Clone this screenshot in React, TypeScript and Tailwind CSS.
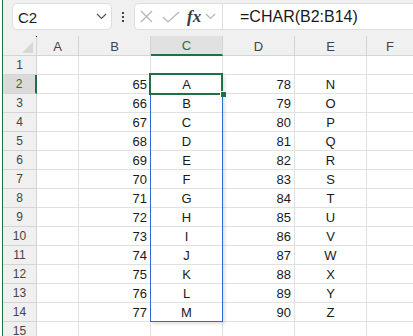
import React from 'react';

// Excel-like sheet: CHAR() spill over B2:B14
const rows = Array.from({ length: 15 }, (_, i) => i + 1);
const cols = ['A', 'B', 'C', 'D', 'E', 'F'];
const colW: Record<string, string> = {
  A: 'w-[42px]',
  B: 'w-[72px]',
  C: 'w-[72px]',
  D: 'w-[72px]',
  E: 'w-[72px]',
  F: 'flex-1',
};

function cellValue(col: string, row: number): string {
  if (row < 2 || row > 14) return '';
  const i = row - 2;
  if (col === 'B') return String(65 + i);
  if (col === 'C') return String.fromCharCode(65 + i);
  if (col === 'D') return String(78 + i);
  if (col === 'E') return String.fromCharCode(78 + i);
  return '';
}

function Chevron({ color = '#555' }: { color?: string }) {
  return (
    <svg width="11" height="7" viewBox="0 0 11 7" fill="none">
      <path d="M1 1l4.5 4.5L10 1" stroke={color} strokeWidth="1.2" />
    </svg>
  );
}

function Toolbar() {
  return (
    <div className="h-[36px] shrink-0 bg-[#f0f0f0] flex items-start pt-[3px] pl-[9px]">
      <div className="w-[100px] h-[27px] bg-white border border-[#dedede] rounded-[5px] flex items-center pl-[5px] pr-[4px]">
        <span className="flex-1 text-[15px] text-[#1a1a1a] leading-none pt-[1px]">C2</span>
        <Chevron />
      </div>
      <div className="w-[22px] h-[27px] flex flex-col items-center justify-center gap-[2px]">
        <span className="w-[2px] h-[2px] bg-[#444]" />
        <span className="w-[2px] h-[2px] bg-[#444]" />
        <span className="w-[2px] h-[2px] bg-[#444]" />
      </div>
      <div className="flex-1 h-[27px] bg-white border border-r-0 border-[#dedede] rounded-l-[5px] flex items-center">
        <div className="w-[88px] h-full flex items-center pl-[5px] border-r border-[#dedede]">
          <svg width="13" height="13" viewBox="0 0 13 13" fill="none">
            <path d="M1 1l11 11M12 1L1 12" stroke="#b4b4b4" strokeWidth="1.2" />
          </svg>
          <svg width="18" height="12" viewBox="0 0 18 12" fill="none" className="ml-[9px]">
            <path d="M1 6l5 5L17 1" stroke="#b4b4b4" strokeWidth="1.2" />
          </svg>
          <span
            className="ml-[7px] text-[17px] italic font-bold text-[#3a3a3a] leading-none"
            style={{ fontFamily: '"Liberation Serif", serif' }}
          >
            fx
          </span>
          <span className="ml-[4px]">
            <Chevron color="#b4b4b4" />
          </span>
        </div>
        <span className="pl-[17px] text-[16px] text-[#1a1a1a] leading-none pt-[1px]">=CHAR(B2:B14)</span>
      </div>
    </div>
  );
}

function HeaderRow() {
  return (
    <div className="h-[20px] shrink-0 flex bg-[#f0f0f0] border-b border-[#d4d4d4]">
      <div className="w-[34px] border-r border-[#d4d4d4] relative">
        <div className="absolute right-[3px] bottom-[2px] w-0 h-0 border-l-[11px] border-l-transparent border-b-[11px] border-b-[#d6d6d6]" />
        <div className="absolute right-[-1px] top-0 w-[1px] h-[1px] bg-black" />
      </div>
      {cols.map((c) => {
        const sel = c === 'C';
        return (
          <div
            key={c}
            className={`${colW[c]} flex items-center justify-center text-[13px] pt-[2px] ${
              c !== 'F' ? 'border-r border-[#d4d4d4]' : ''
            } ${sel ? 'bg-[#e1e1e1] border-b-2 border-b-[#1e7145] text-[#1e7145] -mb-[1px]' : 'text-[#444]'}`}
          >
            {c}
          </div>
        );
      })}
    </div>
  );
}

function SheetRow({ row }: { row: number }) {
  const sel = row === 2;
  return (
    <div className="h-[19px] shrink-0 flex border-b border-[#e1e1e1]">
      <div
        className={`w-[34px] flex items-center justify-center text-[12px] -mb-[1px] border-b border-[#d4d4d4] ${
          sel
            ? 'bg-[#dadada] border-r-2 border-r-[#1e7145] text-[#1e7145]'
            : 'bg-[#f0f0f0] border-r border-r-[#d4d4d4] text-[#444]'
        }`}
      >
        {row}
      </div>
      {cols.map((c) => {
        const v = cellValue(c, row);
        const isNum = c === 'B' || c === 'D';
        return (
          <div
            key={c}
            className={`${colW[c]} flex items-end leading-[15px] pb-[1px] text-[13px] text-[#1a1a1a] ${
              c !== 'F' ? 'border-r border-[#e1e1e1]' : ''
            } ${isNum ? 'justify-end pr-[3px]' : 'justify-center'}`}
          >
            {v}
          </div>
        );
      })}
    </div>
  );
}

export default function App() {
  return (
    <div
      className="w-[413px] h-[336px] overflow-hidden flex bg-white"
      style={{ fontFamily: '"Liberation Sans", Arial, sans-serif' }}
    >
      <div className="w-[2px] bg-white" />
      <div className="w-[1px] bg-[#1e7145]" />
      <div className="flex-1 flex flex-col min-w-0 overflow-hidden">
        <Toolbar />
        <div className="relative flex-1 flex flex-col">
          <HeaderRow />
          {rows.map((r) => (
            <SheetRow key={r} row={r} />
          ))}
          {/* spill range */}
          <div className="absolute left-[147px] top-[38px] w-[73px] h-[248px] border border-[#3168d3] shadow-[2px_2px_3px_rgba(0,0,0,0.12)]" />
          {/* active cell */}
          <div className="absolute left-[146px] top-[37px] w-[74px] h-[22px] border-2 border-[#1e7145]" />
          <div className="absolute left-[217px] top-[55px] w-[6px] h-[6px] bg-[#1e7145] border-l border-t border-white" />
        </div>
      </div>
    </div>
  );
}
